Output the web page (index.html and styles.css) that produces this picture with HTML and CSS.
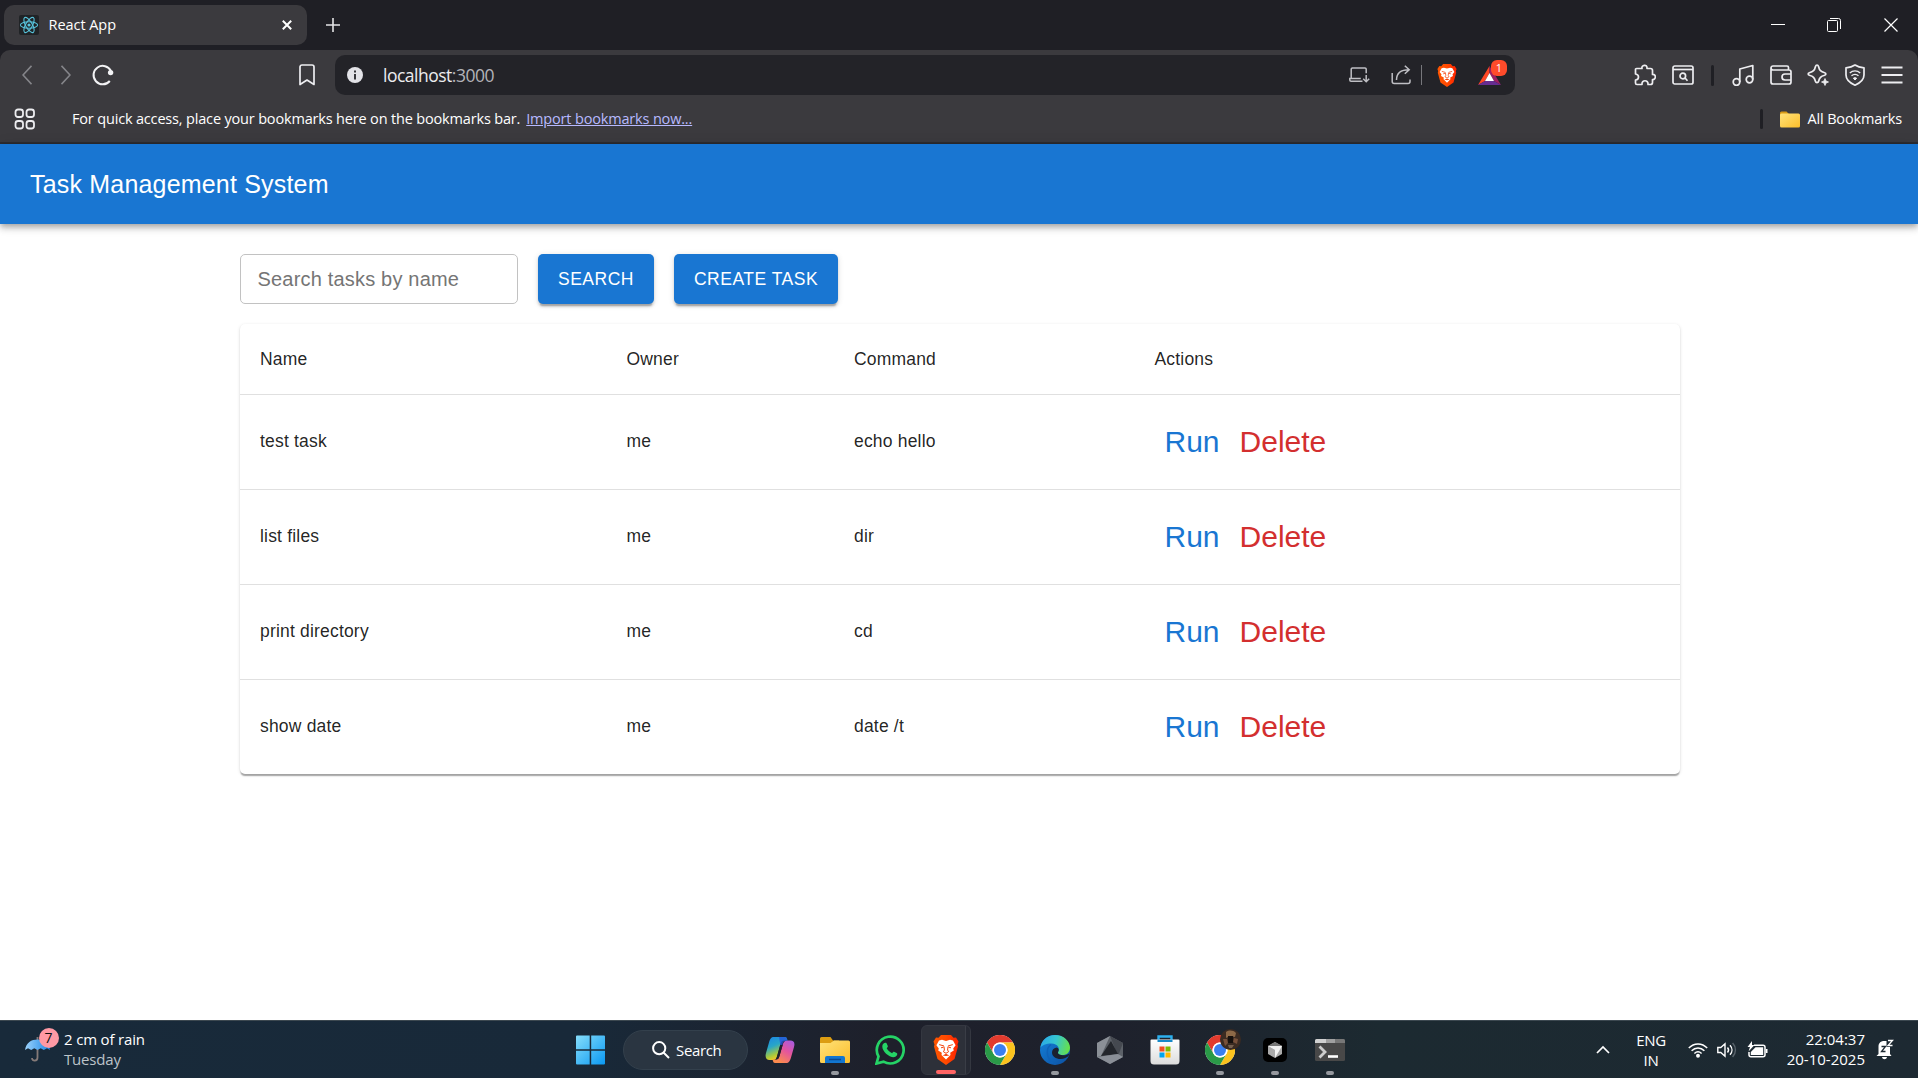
FILE: index.html
```html
<!DOCTYPE html>
<html lang="en">
<head>
<meta charset="utf-8">
<title>React App</title>
<link rel="stylesheet" href="styles.css">
</head>
<body>
<svg width="0" height="0" class="defs" aria-hidden="true">
  <defs>
    <linearGradient id="win" x1="0" y1="0" x2="1" y2="1"><stop offset="0" stop-color="#86defb"/><stop offset="1" stop-color="#0a98f2"/></linearGradient>
    <linearGradient id="fold" x1="0" y1="0" x2="1" y2="1"><stop offset="0" stop-color="#ffe27a"/><stop offset="1" stop-color="#fbbe2b"/></linearGradient>
    <linearGradient id="lion" x1="0" y1="0" x2="1" y2="0"><stop offset="0" stop-color="#ff5601"/><stop offset=".5" stop-color="#ff4a00"/><stop offset="1" stop-color="#ff2000"/></linearGradient>
    <linearGradient id="copA" x1="0" y1="0" x2=".4" y2="1"><stop offset="0" stop-color="#1b84e8"/><stop offset=".45" stop-color="#28a6c8"/><stop offset=".8" stop-color="#a9c93d"/><stop offset="1" stop-color="#f6c722"/></linearGradient>
    <linearGradient id="copB" x1="1" y1="0" x2=".4" y2="1"><stop offset="0" stop-color="#a05ce8"/><stop offset=".5" stop-color="#e3549f"/><stop offset="1" stop-color="#fb8a4e"/></linearGradient>
    <linearGradient id="edgeA" x1="0" y1=".3" x2="1" y2=".5"><stop offset="0" stop-color="#2aa8e8"/><stop offset=".5" stop-color="#36c6d0"/><stop offset="1" stop-color="#66e04a"/></linearGradient>
    <linearGradient id="edgeB" x1="0" y1="0" x2="1" y2="1"><stop offset="0" stop-color="#1583dc"/><stop offset="1" stop-color="#0c4fa0"/></linearGradient>
    <linearGradient id="umb" x1="0" y1="0" x2="1" y2="0"><stop offset="0" stop-color="#9bd2fb"/><stop offset="1" stop-color="#1b86e6"/></linearGradient>
    <linearGradient id="bag" x1="0" y1="0" x2="0" y2="1"><stop offset="0" stop-color="#fff"/><stop offset="1" stop-color="#dcdcdc"/></linearGradient>
    <symbol id="chrome" viewBox="0 0 48 48">
      <circle cx="24" cy="24" r="24" fill="#fff"/>
      <path d="M24 12h20.8A24 24 0 0 0 3.2 12l10.4 18A12 12 0 0 1 24 12z" fill="#e23b2e"/>
      <path d="M34.4 30 24 48A24 24 0 0 0 44.8 12H24a12 12 0 0 1 10.400 18z" fill="#fcc31e"/>
      <path d="M13.600 30 3.200 12A24 24 0 0 0 24 48l10.400-18a12 12 0 0 1-20.800 0z" fill="#2a9a48"/>
      <circle cx="24" cy="24" r="12" fill="#fff"/><circle cx="24" cy="24" r="9.600" fill="#3b7ff0"/>
    </symbol>
    <symbol id="brave" viewBox="0 0 26 30">
      <path d="M8 0h10l2.500 2.800 2.500-.3 2.500 4-1 3 .5 2-3.500 12.500-8.500 6L4.500 24 1 11.500l.5-2-1-3 2.500-4 2.500.3z" fill="url(#lion)"/>
      <path d="M13 6 17 4.800l3 .7 2.600 4.800-2.400 3.200.6 2-3.600 2.200.3 2.300L13 24.500 8.500 20l.3-2.300-3.600-2.200.6-2-2.400-3.200L6 5.500l3-.7z" fill="#fff"/>
      <path d="M6.200 9.600 11 11M19.800 9.600 15 11M8 12.800l2.500-.6M18 12.800l-2.500-.6M11 11.500l.4 3.500-1 1.700 2.600 1.600 2.600-1.600-1-1.700.4-3.500" fill="none" stroke="#f4420a" stroke-width="1"/>
      <path d="m9.600 20.400 3.400-1.600 3.400 1.600-3.400.7z" fill="#f4420a"/>
    </symbol>
  </defs>
</svg>

<header class="tabstrip">
  <div class="tab">
    <svg class="favicon" width="20" height="20" viewBox="0 0 20 20"><rect width="20" height="20" rx="2" fill="#202326"/><g fill="none" stroke="#58c4dc" stroke-width="1.100"><ellipse cx="10" cy="10" rx="8.600" ry="3.300"/><ellipse cx="10" cy="10" rx="8.600" ry="3.300" transform="rotate(60 10 10)"/><ellipse cx="10" cy="10" rx="8.600" ry="3.300" transform="rotate(120 10 10)"/></g><circle cx="10" cy="10" r="1.600" fill="#58c4dc"/></svg>
    <span class="tab-title">React App</span>
    <svg class="tab-close" width="10" height="10" viewBox="0 0 10 10"><path d="m.8.800 8.400 8.400M9.200.800.800 9.200" stroke="#fff" stroke-width="2"/></svg>
  </div>
  <svg class="new-tab" width="14" height="14" viewBox="0 0 14 14"><path d="M7 0v14M0 7h14" stroke="#e4e4e6" stroke-width="1.600"/></svg>
  <div class="window-controls">
    <svg width="14" height="14" viewBox="0 0 14 14"><path d="M0 6.500h14" stroke="#fff"/></svg>
    <svg width="14" height="14" viewBox="0 0 14 14" fill="none" stroke="#fff"><rect x=".5" y="2.500" width="10" height="11" rx="1"/><path d="M3 .5h8.500a2 2 0 0 1 2 2V11"/></svg>
    <svg width="14" height="14" viewBox="0 0 14 14"><path d="m.5.500 13 13m0-13-13 13" stroke="#fff" stroke-width="1.200"/></svg>
  </div>
</header>

<div class="chrome">
  <nav class="toolbar">
    <div class="nav-buttons">
      <svg width="10" height="20" viewBox="0 0 10 20"><path d="M9.500.800 1 10l8.500 9.200" fill="none" stroke="#85858a" stroke-width="1.600"/></svg>
      <svg width="10" height="20" viewBox="0 0 10 20"><path d="M.5.800 9 10 .5 19.200" fill="none" stroke="#85858a" stroke-width="1.600"/></svg>
      <svg width="22" height="22" viewBox="0 0 22 22"><path d="M19 7A9.200 9.200 0 1 0 17.800 17" fill="none" stroke="#f2f2f4" stroke-width="2"/><circle cx="18.600" cy="8.600" r="2.700" fill="#f2f2f4"/></svg>
    </div>
    <svg class="save" width="16" height="22" viewBox="0 0 16 22"><path d="M1 3a2 2 0 0 1 2-2h10a2 2 0 0 1 2 2v17.500l-7-4.500-7 4.500z" fill="none" stroke="#ededf0" stroke-width="1.700" stroke-linejoin="round"/></svg>
    <div class="omnibox">
      <svg width="16" height="16" viewBox="0 0 16 16"><circle cx="8" cy="8" r="8" fill="#e3e3e8"/><path d="M8 3.500v2M8 7v5.500" stroke="#232328" stroke-width="1.800"/></svg>
      <span class="url">localhost<span class="port">:3000</span></span>
      <div class="omni-actions">
        <svg width="21" height="16" viewBox="0 0 21 16" fill="none" stroke="#bfbfc4" stroke-width="1.500"><path d="M13.500 14.200H2a1.200 1.200 0 0 1-1.200-1.200v-1.500h11M2.200 11.500V2.200a1.200 1.200 0 0 1 1.200-1.200H16a1.200 1.200 0 0 1 1.200 1.200v4M17.200 8v6.500m-3-2.800 3 3 3-3"/></svg>
        <svg width="20" height="20" viewBox="0 0 20 20" fill="none" stroke="#bfbfc4" stroke-width="1.500"><path d="M1.200 8v8.500a2 2 0 0 0 2 2H17a2 2 0 0 0 2-2V14.500M5.500 15c0-6.500 4-10.200 12.500-10.200M13.800.800l4.400 4-4.400 4"/></svg>
        <i class="omni-sep"></i>
        <svg width="20" height="23"><use href="#brave"/></svg>
        <span class="rewards">
          <svg width="23" height="19" viewBox="0 0 23 19"><path d="M11.500 0 0 19l7-4 4.500-8z" fill="#ff4724"/><path d="M11.500 0 23 19l-7-4-4.500-8z" fill="#9e1f63"/><path d="M0 19h23l-7-4H7z" fill="#662d91"/><path d="M11.500 7 16 15H7z" fill="#fff"/></svg>
          <b class="rewards-badge">1</b>
        </span>
      </div>
    </div>
    <div class="extensions">
      <svg width="22" height="22" viewBox="0 0 22 22"><path d="M2.500 4.500H8C7 1 13.500-.5 13 4.500h3.500a2 2 0 0 1 2 2v4c4-.5 3.500 5.500 0 5v3a2 2 0 0 1-2 2H14c.5-5-6.500-5-6 0H3a1.500 1.500 0 0 1-1.500-1.500V16c4-.5 4-5.500 0-6V5.500a1 1 0 0 1 1-1z"/></svg>
      <svg width="22" height="20" viewBox="0 0 22 20"><rect x="1" y="1" width="20" height="18" rx="1.800"/><path d="M1 4.500h20"/><circle cx="10.800" cy="11" r="2.800"/><path d="m13 13 2.500 2.800"/></svg>
      <i class="ext-sep"></i>
      <svg width="22" height="22" viewBox="0 0 22 22"><circle cx="4.500" cy="18" r="3.300"/><circle cx="17.500" cy="15.500" r="3.300"/><path d="M7.800 18V5L20.800 1.500v14"/></svg>
      <svg width="22" height="20" viewBox="0 0 22 20"><path d="M18.500 5V2.500A1.500 1.500 0 0 0 17 1H3a2 2 0 0 0-2 2v14a2 2 0 0 0 2 2h16a2 2 0 0 0 2-2V7a2 2 0 0 0-2-2H3a2 2 0 0 1-2-2M21 9h-6a3 3 0 0 0 0 6h6"/></svg>
      <svg width="22" height="22" viewBox="0 0 22 22"><path d="M10 1c.8 0 1.200.5 1.500 1.500 1 4 2.200 5.200 6.200 6.200 1.500.4 1.500 2.200 0 2.600-4 1-5.200 2.200-6.200 6.200-.4 1.500-2.600 1.500-3 0-1-4-2.200-5.200-6.200-6.200-1.500-.4-1.500-2.200 0-2.600 4-1 5.200-2.200 6.200-6.200C8.800 1.500 9.200 1 10 1z"/><path d="m18 14.500 1 2.500 2.500 1-2.500 1-1 2.500-1-2.500-2.500-1 2.500-1z" fill="#ededf0" stroke-width=".8"/></svg>
      <svg width="20" height="22" viewBox="0 0 20 22"><path d="M10 1c3 2 5.500 2.500 9 2.800V11c0 5-4 8-9 10.200C5 19 1 16 1 11V3.800C4.500 3.500 7 3 10 1z"/><path d="M4.800 9c3-2.800 7.400-2.800 10.400 0M6.500 11.800c2-1.800 5-1.800 7 0" stroke-width="1.400"/><path d="M8.300 14.300c1-.9 2.400-.9 3.400 0L10 16z" fill="#ededf0" stroke-width="1"/></svg>
      <svg width="22" height="18" viewBox="0 0 22 18"><path d="M.5 1.500h21M.5 9h21M.5 16.500h21" stroke-width="2"/></svg>
    </div>
  </nav>
  <div class="bookmarks">
    <svg width="21" height="22" viewBox="0 0 21 22" fill="none" stroke="#ededf0" stroke-width="1.800"><rect x="1.500" y="1.500" width="7.500" height="7.500" rx="2.500"/><rect x="12.500" y="1.500" width="7.500" height="7.500" rx="2.500"/><rect x="1.500" y="13" width="7.500" height="7.500" rx="2.500"/><rect x="12.500" y="13" width="7.500" height="7.500" rx="2.500"/></svg>
    <span class="hint">For quick access, place your bookmarks here on the bookmarks bar.</span>
    <a class="import">Import bookmarks now...</a>
    <i class="bm-sep"></i>
    <svg class="bm-folder" width="20" height="17" viewBox="0 0 20 17"><path d="M0 2a1.500 1.500 0 0 1 1.500-1.500h5L9 3h9v4H0z" fill="#d89a15"/><rect y="2.500" width="20" height="14" rx="1.500" fill="url(#fold)"/></svg>
    <span class="all-bm">All Bookmarks</span>
  </div>
</div>

<main class="page">
  <div class="appbar"><h1>Task Management System</h1></div>
  <section class="container">
    <div class="controls">
      <input class="search-field" type="text" placeholder="Search tasks by name">
      <button class="btn">SEARCH</button>
      <button class="btn">CREATE TASK</button>
    </div>
    <div class="paper">
      <div class="row head"><span>Name</span><span>Owner</span><span>Command</span><span>Actions</span></div>
      <div class="row"><span>test task</span><span>me</span><span>echo hello</span><span class="actions"><a class="run">Run</a><a class="delete">Delete</a></span></div>
      <div class="row"><span>list files</span><span>me</span><span>dir</span><span class="actions"><a class="run">Run</a><a class="delete">Delete</a></span></div>
      <div class="row"><span>print directory</span><span>me</span><span>cd</span><span class="actions"><a class="run">Run</a><a class="delete">Delete</a></span></div>
      <div class="row"><span>show date</span><span>me</span><span>date /t</span><span class="actions"><a class="run">Run</a><a class="delete">Delete</a></span></div>
    </div>
  </section>
</main>

<footer class="taskbar">
  <div class="weather">
    <span class="weather-icon">
      <svg width="26" height="28" viewBox="0 0 26 28"><path d="M12.500 1v20.500c0 4-5.500 4-5.500.5" fill="none" stroke="#857a78" stroke-width="1.800"/><path d="M0 14C1 6.500 6.500 3.500 12.500 3.500S24 6.500 25 14l-3-1.800-3.200 1.800-3.100-1.800-3.200 1.800-3.200-1.800L6.200 14 3 12.200z" fill="url(#umb)"/></svg>
      <b class="weather-badge">7</b>
    </span>
    <div class="weather-text"><span>2 cm of rain</span><span class="dim">Tuesday</span></div>
  </div>
  <div class="apps">
    <svg class="start" width="30" height="30" viewBox="0 0 30 30"><path d="M0 1.500a1 1 0 0 1 1-1h12.700v13.700H0zM15.200.500h12.800a1 1 0 0 1 1 1v12.700H15.200zM0 15.700h13.700v13.800H1a1 1 0 0 1-1-1zM15.200 15.700H29v12.800a1 1 0 0 1-1 1H15.200z" fill="url(#win)"/></svg>
    <div class="search-pill">
      <svg width="18" height="18" viewBox="0 0 18 18" fill="none" stroke="#fff" stroke-width="2"><circle cx="7.200" cy="7.200" r="6.100"/><path d="m11.500 11.500 5.500 5.500"/></svg>
      <span>Search</span>
    </div>
    <div class="slot"><svg width="30" height="28" viewBox="0 0 30 28"><path d="M20 1H9C6 1 5 3 4 6.500L1 17c-1.300 4.500.5 7 3.500 7H8c2.500 0 3.500-1.500 4.300-4.500L15.500 8c.8-2.500 1.500-3.500 3.500-3.500h3.500C21.800 2 21.500 1 20 1z" fill="url(#copA)"/><path d="M10 27h11c3 0 4-2 5-5.500L29 11c1.300-4.500-.5-6.500-3.500-6.500H22c-2.500 0-3.500 1.500-4.300 4.500L14.500 20c-.8 2.500-1.500 3.500-3.500 3.500H7.500C8.200 26 8.500 27 10 27z" fill="url(#copB)"/><path d="M14 1h6c1.500 0 2 1.200 2.500 3.500-3 0-4.200.8-5 3.500L16 13z" fill="#2456d8" opacity=".8"/><path d="M15.200 9 12 20.500c-.6 1.800-1 2.500-1.600 3 2.400.2 3.400-.8 4.100-3.500L17.600 9z" fill="#1e212c"/></svg></div>
    <div class="slot open"><svg width="30" height="28" viewBox="0 0 30 28"><path d="M0 2.500A1.500 1.500 0 0 1 1.500 1h9L13 4.500h6V10H0z" fill="#dc9d12"/><path d="M0 7h10.500L14 4.500h14.500A1.500 1.500 0 0 1 30 6v19.500a1.500 1.500 0 0 1-1.500 1.500h-27A1.500 1.500 0 0 1 0 25.500z" fill="url(#fold)"/><path d="M5 27v-5a2 2 0 0 1 2-2h16a2 2 0 0 1 2 2v5z" fill="#1276d0"/><path d="M9 23.500h12" stroke="#0b4a91" stroke-width="1.500"/></svg></div>
    <div class="slot"><svg width="30" height="30" viewBox="0 0 30 30"><path d="m1.500 28.500 2-7A13.400 13.400 0 1 1 8.500 26.600z" fill="none" stroke="#25d366" stroke-width="2.700"/><path d="M10.500 7.800c.7 0 1 .2 1.300.9l1 2.400c.2.600-.1 1-1.100 2.200 1.500 2.500 3.200 4 5.400 4.900 1-1.200 1.300-1.700 1.900-1.400l2.700 1.300c1.600.8-.3 4.200-3.200 4.200-4.500 0-11.500-6-11.200-11 .1-2 1.600-3.500 3.200-3.500z" fill="#25d366"/></svg></div>
    <div class="slot open active"><svg width="26" height="30"><use href="#brave"/></svg></div>
    <div class="slot"><svg width="30" height="30"><use href="#chrome"/></svg></div>
    <div class="slot open"><svg width="30" height="30" viewBox="0 0 30 30"><circle cx="15" cy="15" r="15" fill="url(#edgeB)"/><path d="M.3 13C1.500 5 7.500 0 15 0c9 0 15 6.500 15 12.500 0 5-3.500 7.500-7.500 7.500-4 0-5.500-1.800-4.200-3.500C20 14 18 8.500 11.500 8.500 6 8.500 1.500 10.500.3 13z" fill="url(#edgeA)"/><path d="M16.500 12.500c-3 .5-4.500 2.500-4.500 5 0 4 4 6.500 8.500 6.500 3.500 0 6.500-1.500 8-3a15 15 0 0 0 .8-2.500C27 20 25 20.500 22.500 20.300c-3.500-.3-5.200-2-4.200-3.800 1-1.600.3-3.500-1.800-4z" fill="#1b2130"/><path d="M11 9.500C6 13 5.500 22 13 28.500" fill="none" stroke="#0f62b8" stroke-width="1.500"/></svg></div>
    <div class="slot"><svg width="28" height="28" viewBox="0 0 28 28"><path d="m14 0 13 7v14l-13 7-13-7V7z" fill="#5c6168"/><path d="M14 0 1 7v14l4-1z" fill="#8b9097"/><path d="m14 0 13 7-5 13L16 5z" fill="#454950"/><path d="m15 5 7 13-17 2z" fill="#23262c"/><path d="M1 21 22 18l5 3-13 7z" fill="#8a8f97"/></svg></div>
    <div class="slot"><svg width="30" height="30" viewBox="0 0 30 30"><path d="M8.500 7V1.500h13V7" fill="none" stroke="#2cb0ee" stroke-width="2.400"/><path d="M.5 5.500a1 1 0 0 1 1-1h27a1 1 0 0 1 1 1V26a3.500 3.500 0 0 1-3.500 3.500H4A3.500 3.500 0 0 1 .5 26z" fill="url(#bag)"/><path d="M8.500 4.500V6h13V4.500" fill="none" stroke="#1789c8" stroke-width="2"/><path d="M9.500 11.500h5v5h-5z" fill="#f25022"/><path d="M15.500 11.500h5v5h-5z" fill="#7fba00"/><path d="M9.500 17.500h5v5h-5z" fill="#00a4ef"/><path d="M15.500 17.500h5v5h-5z" fill="#ffb900"/></svg></div>
    <div class="slot open"><svg width="30" height="30"><use href="#chrome"/></svg><svg class="avatar" width="21" height="21" viewBox="0 0 21 21"><circle cx="10.500" cy="10.500" r="10.500" fill="#3b2b22"/><path d="M6 3c3-2 7-2 10 1l-1 4-5-1-4 2z" fill="#8d6947"/><path d="M3 10h4l1 4-3 3zM14 9l4 1-1 5-4-2z" fill="#77503a"/><path d="M8 7h5v7H8z" fill="#17110e"/><path d="M8 16h6l-2 3H9z" fill="#75604f"/></svg></div>
    <div class="slot open"><svg width="24" height="24" viewBox="0 0 24 24"><rect width="24" height="24" rx="5" fill="#000"/><path d="m12 4 7 4v8l-7 4-7-4V8z" fill="#aaa"/><path d="m12 4 7 4-7 4-7-4z" fill="#777"/><path d="M5 8h14l-7 12v-8z" fill="#f2f2f2"/></svg></div>
    <div class="slot open"><svg width="30" height="22" viewBox="0 0 30 22"><rect width="30" height="22" rx="1.500" fill="#484848"/><path d="M0 4V1.500A1.500 1.500 0 0 1 1.500 0H11v4z" fill="#d0d0d0"/><path d="M11 0h9v4h-9z" fill="#a0a0a0"/><path d="M20 0h8.500A1.500 1.500 0 0 1 30 1.500V4H20z" fill="#777"/><path d="m4.500 7.500 5.500 5.500-5.500 5.500" fill="none" stroke="#ccc" stroke-width="2.800"/><path d="M13 17.500h10" stroke="#fff" stroke-width="2.600"/></svg></div>
  </div>
  <div class="tray">
    <svg class="t-up" width="14" height="9" viewBox="0 0 14 9"><path d="m1 8 6-6 6 6" fill="none" stroke="#fff" stroke-width="1.700"/></svg>
    <div class="lang"><span>ENG</span><span>IN</span></div>
    <svg class="t-wifi" width="20" height="16" viewBox="0 0 20 16" fill="none" stroke="#fff" stroke-width="1.500"><path d="M.8 6c5.200-5.500 13.200-5.500 18.400 0M3.600 8.800c3.700-3.800 9.100-3.800 12.800 0M6.400 11.500c2.200-2.100 5-2.100 7.200 0"/><circle cx="10" cy="13.800" r="1.200" fill="#fff"/></svg>
    <svg class="t-vol" width="21" height="16" viewBox="0 0 21 16" fill="none" stroke="#fff" stroke-width="1.400"><path d="M.8 5.500h3L8 1.800v12.400l-4.200-3.700h-3zM10.500 5.500c1.300 1.500 1.300 3.500 0 5M13 3.200c2.600 2.800 2.600 6.800 0 9.600"/><path d="M15.600 1c3.800 4 3.800 10 0 14" stroke="#59636b"/></svg>
    <svg class="t-bat" width="21" height="18" viewBox="0 0 21 18"><path d="M7 4.200h9a2 2 0 0 1 2 2v7.600a2 2 0 0 1-2 2H4a2 2 0 0 1-2-2V11" fill="none" stroke="#fff" stroke-width="1.500"/><path d="M8.500 6.200h7.700v7.800H3.800V11z" fill="#fff"/><path d="M18.800 8h1.700v4h-1.700zM5 0 .500 6H3l-1.500 4.500L7.500 4H5z" fill="#fff"/></svg>
    <div class="clock"><span>22:04:37</span><span>20-10-2025</span></div>
    <svg class="t-bell" width="18" height="21" viewBox="0 0 18 21"><path d="M2.500 7.500C2.500 3.800 5 2 8.500 2h2v6H14v7l1.500 2H.5l2-2zM6 18h5c-.5 3-4.500 3-5 0z" fill="#fff"/><path d="M5.500 7.500h4l-4 5h4" fill="none" stroke="#1d2932" stroke-width="1.300"/><path d="M12 1.500h4.500L12 6.500h4.500" fill="none" stroke="#fff" stroke-width="1.300"/></svg>
  </div>
</footer>
</body>
</html>
```
FILE: styles.css
```css
* { box-sizing: border-box; }
html, body { margin: 0; height: 100%; }
body {
  display: flex;
  flex-direction: column;
  width: 1918px;
  height: 1078px;
  overflow: hidden;
  background: #1f1f25;
  color: #fff;
  font: 15px "Open Sans", "Noto Sans", sans-serif;
  letter-spacing: -0.35px;
  white-space: nowrap;
}
svg { display: block; flex: none; }
.defs { position: absolute; }

/* Tab strip */
.tabstrip { display: flex; align-items: center; height: 50px; flex: none; padding-left: 4px; }
.tab { display: flex; align-items: center; width: 302.500px; height: 40px; padding: 0 15px; border-radius: 10px; background: #3b3a3e; }
.tab-title { flex: 1; margin-left: 9.500px; padding-bottom: 2px; font-size: 14.500px; letter-spacing: -0.050px; }
.new-tab { margin-left: 19.500px; }
.window-controls { display: flex; gap: 42.500px; margin: 0 20px 0 auto; }
.window-controls svg:nth-child(2) { margin: 0 1px 0 -1px; }

/* Toolbar and bookmarks */
.chrome { flex: none; height: 94px; border-radius: 10px 10px 0 0; background: #3b3a3e; border-bottom: 2px solid #2c2c30; }
.toolbar { display: flex; align-items: center; height: 50px; padding: 0 15px 0 22px; }
.nav-buttons { display: flex; align-items: center; gap: 28.500px; width: 276.500px; }
.nav-buttons svg:last-child { margin-left: -7px; }
.omnibox { display: flex; align-items: center; width: 1180px; height: 40px; margin-left: 20.500px; padding: 0 14px 0 12px; border-radius: 10px; background: #232328; }
.url { flex: 1; margin-left: 20px; padding-bottom: 1px; font-size: 17.500px; letter-spacing: -0.500px; color: #ececef; }
.port { color: #b3b3b8; }
.omni-actions { display: flex; align-items: center; }
.omni-actions > svg:nth-child(2) { margin-left: 21px; }
.omni-sep { width: 1px; height: 20px; margin: 0 15px 0 10px; background: #77777c; }
.rewards { position: relative; margin-left: 21px; }
.rewards-badge { position: absolute; left: 13px; top: -6px; width: 16px; height: 16px; border-radius: 6px; background: #ff4b2b; font: 11px/16px "Open Sans", sans-serif; text-align: center; letter-spacing: 0; }
.extensions { display: flex; align-items: center; gap: 15.800px; margin-left: auto; }
.extensions svg { fill: none; stroke: #ededf0; stroke-width: 1.700; stroke-linejoin: round; }
.ext-sep { width: 3px; height: 21px; margin: 0 2px 0 1.500px; border-radius: 2px; background: #1f1f24; }
.bookmarks { display: flex; align-items: center; height: 38px; padding: 0 16px 0 14px; font-size: 14.500px; letter-spacing: -0.170px; }
.hint { margin-left: 37px; padding-bottom: 2px; }
.import { margin-left: 6px; padding-bottom: 2px; color: #b7b9ff; text-decoration: underline; }
.bm-sep { width: 3px; height: 20px; margin: 0 17px 0 auto; border-radius: 2px; background: #1f1f24; }
.all-bm { margin-left: 8px; padding-bottom: 2px; }

/* Web page */
.page { flex: 1; background: #fff; color: rgba(0, 0, 0, .87); font-family: "Liberation Sans", Arial, sans-serif; letter-spacing: normal; }
.appbar { display: flex; align-items: center; height: 80px; padding: 0 30px; background: #1976d2; color: #fff; box-shadow: 0 2.500px 5px -1px rgba(0,0,0,.2), 0 5px 6px rgba(0,0,0,.14), 0 1px 12.500px rgba(0,0,0,.12); }
.appbar h1 { margin: 0; font-size: 25px; font-weight: 400; letter-spacing: .0075em; }
.container { width: 1440px; margin: 30px 0 0 240px; }
.controls { display: flex; gap: 20px; height: 50px; }
.search-field { width: 278px; padding: 0 16.500px; border: 1px solid #c2c2c2; border-radius: 5px; outline: 0; font: 20px "Liberation Sans", Arial, sans-serif; letter-spacing: .00938em; }
.search-field::placeholder { color: #757575; }
.btn { padding: 0 20px; border: 0; border-radius: 5px; background: #1976d2; color: #fff; font: 17.500px "Liberation Sans", Arial, sans-serif; letter-spacing: .02857em; box-shadow: 0 3.750px 1.250px -2.500px rgba(0,0,0,.2), 0 2.500px 2.500px rgba(0,0,0,.14), 0 1px 6.250px rgba(0,0,0,.12); }
.paper { margin-top: 20px; height: 450px; border-radius: 5px; background: #fff; box-shadow: 0 2.500px 1.250px -1.250px rgba(0,0,0,.2), 0 1.250px 1.250px rgba(0,0,0,.14), 0 1px 3.750px rgba(0,0,0,.12); }
.row { display: grid; grid-template-columns: 366.500px 227.500px 300.500px 1fr; align-items: center; height: 95px; padding: 0 0 2px 20px; border-bottom: 1px solid #e0e0e0; font-size: 17.500px; letter-spacing: .01071em; }
.row.head { height: 71px; padding-bottom: 0; }
.row:last-child { height: 94px; border-bottom: 0; }
.actions { display: flex; gap: 20px; padding: 1px 0 0 10px; font-size: 30px; letter-spacing: 0; }
.run { color: #1976d2; }
.delete { color: #d32f2f; }

/* Taskbar */
.taskbar { display: grid; grid-template-columns: 576px 1fr 322px; flex: none; height: 58px; border-top: 1px solid #3c4850; background: linear-gradient(90deg, #182a3a 0, #182939 30%, #1e202b 46%, #1e212c 58%, #1c2a31 72%, #1d2932 100%); }
.weather { display: flex; align-items: center; padding-left: 25px; }
.weather-icon { position: relative; }
.weather-badge { position: absolute; left: 13.500px; top: -8px; width: 20px; height: 20px; border-radius: 50%; background: #ff99a4; color: #111; font: 14px/20px "Open Sans", sans-serif; text-align: center; letter-spacing: 0; }
.weather-text { display: flex; flex-direction: column; margin-left: 13px; padding-bottom: 2px; line-height: 20px; letter-spacing: -0.170px; }
.dim { color: #bcc3c9; }
.apps { display: flex; align-items: center; }
.search-pill { display: flex; align-items: center; width: 125px; height: 40px; margin: 0 4.500px 0 17px; padding-left: 28px; gap: 6px; border: 1px solid #33404c; border-radius: 20px; background: #2a3541; }
.slot { position: relative; display: flex; align-items: center; justify-content: center; width: 55px; height: 57px; }
.slot.open::after { content: ""; position: absolute; left: 23.500px; bottom: 3px; width: 8px; height: 4px; border-radius: 2px; background: #96999f; }
.slot.active { width: 50px; height: 50px; margin: 0 2px 0 3px; border: 1px solid #343740; border-radius: 6px; background: linear-gradient(90deg, #2d3039 43px, #3a3d46 43px, #3a3d46 44px, #262933 44px); }
.slot.active::after { left: 14px; bottom: 0; width: 20px; background: #ff6464; }
.avatar { position: absolute; left: 27.500px; top: 8px; }
.tray { display: flex; align-items: center; line-height: 20px; }
.lang { display: flex; flex-direction: column; align-items: center; width: 36px; margin-left: 23px; }
.t-wifi { margin-left: 19px; }
.t-vol { margin-left: 9px; }
.t-bat { margin-left: 9px; }
.clock { display: flex; flex-direction: column; align-items: flex-end; width: 84px; margin-left: 13px; padding-bottom: 2px; letter-spacing: 0; }
.t-bell { margin-left: 11px; }
```
